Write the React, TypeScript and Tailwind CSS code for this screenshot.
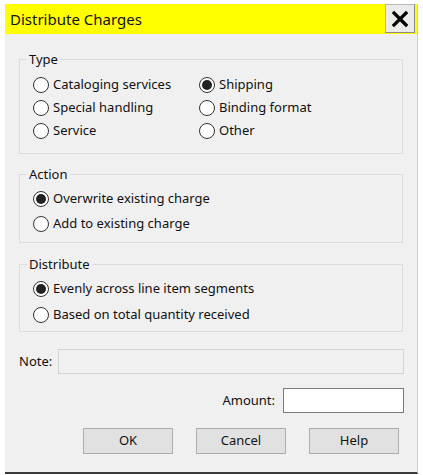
import React from 'react'

const font = { fontFamily: '"Noto Sans", "Open Sans", sans-serif' }

function Radio({ label, checked = false }: { label: string; checked?: boolean }) {
    return (
        <div className="flex items-center h-[23px]">
            <span className="w-[16px] h-[16px] rounded-full border border-[#333] bg-white flex items-center justify-center shrink-0 -ml-[1px]">
                {checked && <span className="w-[10px] h-[10px] rounded-full bg-[#222]" />}
            </span>
            <span className="ml-[4px] text-[13px] text-[#111] leading-none">{label}</span>
        </div>
    )
}

function Group({ title, className, children }: { title: string; className?: string; children: React.ReactNode }) {
    return (
        <fieldset className={`border border-[#dcdcdc] mx-[14px] px-[14px] pb-[8px] ${className ?? ''}`}>
            <legend className="text-[13px] text-[#111] px-[2px] -ml-[7px] leading-none">{title}</legend>
            {children}
        </fieldset>
    )
}

export default function App() {
    return (
        <div className="w-[423px] h-[475px] bg-white pt-[4px] pl-[5px]" style={font}>
            <div className="w-[413px] h-[470px] bg-[#f0f0f0] border-r border-[#c8d0dc] border-b-[2px] border-b-[#3a3a3a] flex flex-col">
                {/* Title bar */}
                <div className="flex h-[30px] bg-[#ffff00] items-stretch">
                    <div className="flex-1 pl-[5px] flex items-center text-[15px] text-[#111]">Distribute Charges</div>
                    <button className="w-[30px] h-[29px] mr-[2px] bg-[#ebebeb] border border-[#b8b8b8] border-b-[#8a8a8a] border-r-[#8a8a8a] flex items-center justify-center">
                        <svg width="18" height="18" viewBox="0 0 18 18">
                            <path d="M3 3 L15 15 M15 3 L3 15" stroke="#000" strokeWidth="3.2" strokeLinecap="square" />
                        </svg>
                    </button>
                </div>

                <Group title="Type" className="mt-[19px] h-[101px]">
                    <div className="grid grid-cols-[166px_1fr] mt-[7px]">
                        <Radio label="Cataloging services" />
                        <Radio label="Shipping" checked />
                        <Radio label="Special handling" />
                        <Radio label="Binding format" />
                        <Radio label="Service" />
                        <Radio label="Other" />
                    </div>
                </Group>

                <Group title="Action" className="mt-[14px] h-[75px]">
                    <div className="mt-[6px] flex flex-col gap-[2px]">
                        <Radio label="Overwrite existing charge" checked />
                        <Radio label="Add to existing charge" />
                    </div>
                </Group>

                <Group title="Distribute" className="mt-[15px] h-[74px]">
                    <div className="mt-[6px] flex flex-col gap-[3px]">
                        <Radio label="Evenly across line item segments" checked />
                        <Radio label="Based on total quantity received" />
                    </div>
                </Group>

                <div className="flex items-center mt-[17px] pl-[14px] pr-[13px]">
                    <span className="text-[13px] text-[#111] w-[39px]">Note:</span>
                    <div className="flex-1 h-[25px] bg-[#f0f0f0] border border-[#d4d4d4]" />
                </div>

                <div className="flex items-center justify-end mt-[14px] pr-[13px]">
                    <span className="text-[13px] text-[#111] mr-[8px]">Amount:</span>
                    <div className="w-[121px] h-[25px] bg-white border border-[#7a7a7a]" />
                </div>

                <div className="flex mt-[15px] pl-[78px] gap-[23px]">
                    {['OK', 'Cancel', 'Help'].map((b) => (
                        <button key={b} className="w-[90px] h-[26px] bg-[#e1e1e1] border border-[#adadad] text-[13px] text-[#111]">
                            {b}
                        </button>
                    ))}
                </div>
            </div>
        </div>
    )
}
